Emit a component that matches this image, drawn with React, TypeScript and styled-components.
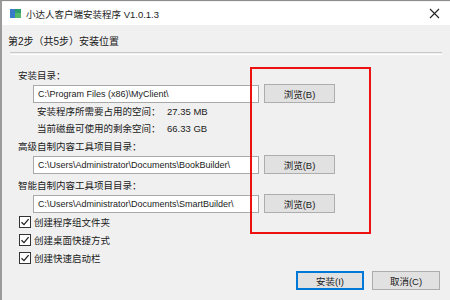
import React from 'react';
import styled, { createGlobalStyle } from 'styled-components';

const GlobalStyle = createGlobalStyle`
  html, body {
    margin: 0;
    padding: 0;
    background: #f0f0f0;
  }
  body {
    font-family: "Liberation Sans", "Noto Sans CJK SC", sans-serif;
    font-size: 9.5px;
    color: #1a1a1a;
  }
`;

const Window = styled.div`
  position: relative;
  width: 450px;
  height: 300px;
  box-sizing: border-box;
  display: flex;
  flex-direction: column;
  background: #f0f0f0;
  border-left: 2px solid #9a9a9a;
  border-top: 1px solid #8c8c8c;
  overflow: hidden;
`;

const TitleBar = styled.div`
  height: 23px;
  flex: 0 0 auto;
  display: flex;
  align-items: center;
  background: #ffffff;
  padding-left: 8px;
  padding-right: 8px;
  border-top: 1px solid #f4f4f4;
`;

const TitleText = styled.span`
  margin-left: 5px;
  flex: 1;
  font-size: 9.5px;
  color: #222;
`;

const Close = styled.span`
  width: 12px;
  height: 12px;
  display: flex;
  align-items: center;
  justify-content: center;
  margin-right: 2px;
`;

const StepHeader = styled.div`
  margin: 9px 0 0 6px;
  line-height: 16px;
  font-size: 10px;
`;

const Separator = styled.div`
  margin: 2px 8px 0 8px;
  height: 1px;
  border-top: 1px solid #c8c8c8;
  border-bottom: 1px solid #ffffff;
`;

const Body = styled.div`
  padding-left: 16px;
  display: flex;
  flex-direction: column;
`;

const GroupLabel = styled.div<{ $top: number }>`
  margin-top: ${({ $top }) => $top}px;
  line-height: 16px;
`;

const PathRow = styled.div`
  display: flex;
  align-items: center;
  height: 19px;
  padding-left: 15px;
`;

const PathInput = styled.div`
  width: 226px;
  height: 18px;
  box-sizing: border-box;
  background: #ffffff;
  border: 1px solid #a9a9a9;
  padding-left: 4px;
  font-size: 9px;
  line-height: 16px;
  white-space: nowrap;
  overflow: hidden;
`;

const Button = styled.button<{ $primary?: boolean }>`
  box-sizing: border-box;
  height: 19px;
  padding: 0;
  font-family: inherit;
  font-size: 9.5px;
  color: #1a1a1a;
  background: #e1e1e1;
  border: 1px solid ${({ $primary }) => ($primary ? '#0078d7' : '#adadad')};
  box-shadow: ${({ $primary }) => ($primary ? 'inset 0 0 0 1px #0078d7' : 'none')};
  cursor: pointer;
`;

const BrowseButton = styled(Button)`
  width: 71px;
  margin-left: 5px;
`;

const InfoRow = styled.div`
  display: grid;
  grid-template-columns: 130px auto;
  padding-left: 19px;
  line-height: 17px;
`;

const CheckRow = styled.label`
  display: flex;
  align-items: center;
  gap: 3px;
  height: 18px;
  padding-left: 1px;
`;

const Footer = styled.div`
  margin-top: auto;
  margin-bottom: 10px;
  display: flex;
  justify-content: flex-end;
  gap: 8px;
  padding-right: 10px;
`;

const FooterButton = styled(Button)`
  width: 68px;
`;

const Highlight = styled.div`
  position: absolute;
  left: 248px;
  top: 66px;
  width: 117px;
  height: 163px;
  border: 2px solid #ee1111;
  pointer-events: none;
`;

const AppIcon = () => (
  <svg width="11" height="9" viewBox="0 0 11 9">
    <rect x="0" y="0" width="11" height="9" fill="#2f9e6e" />
    <rect x="0" y="0" width="5" height="9" fill="#3a7bc8" />
    <rect x="5" y="4" width="6" height="5" fill="#55b86a" />
  </svg>
);

const CheckBox = () => (
  <svg width="12" height="12" viewBox="0 0 12 12">
    <rect x="0.5" y="0.5" width="11" height="11" fill="#ffffff" stroke="#333333" />
    <path d="M2.5 6.2 L5 8.6 L9.6 3.2" fill="none" stroke="#222222" strokeWidth="1.3" />
  </svg>
);

const CloseIcon = () => (
  <svg width="11" height="11" viewBox="0 0 11 11">
    <path d="M1 1 L10 10 M10 1 L1 10" stroke="#222" strokeWidth="1.1" />
  </svg>
);

const paths = [
  { label: '高级自制内容工具项目目录：', value: 'C:\\Users\\Administrator\\Documents\\BookBuilder\\', top: 2 },
  { label: '智能自制内容工具项目目录：', value: 'C:\\Users\\Administrator\\Documents\\SmartBuilder\\', top: 4 },
];

const checks = ['创建程序组文件夹', '创建桌面快捷方式', '创建快速启动栏'];

export default function App() {
  return (
    <>
      <GlobalStyle />
      <Window>
        <TitleBar>
          <AppIcon />
          <TitleText>小达人客户端安装程序 V1.0.1.3</TitleText>
          <Close>
            <CloseIcon />
          </Close>
        </TitleBar>
        <StepHeader>第2步（共5步）安装位置</StepHeader>
        <Separator />
        <Body>
          <GroupLabel $top={13}>安装目录：</GroupLabel>
          <PathRow>
            <PathInput>C:\Program Files (x86)\MyClient\</PathInput>
            <BrowseButton>浏览(B)</BrowseButton>
          </PathRow>
          <InfoRow>
            <span>安装程序所需要占用的空间：</span>
            <span>27.35 MB</span>
          </InfoRow>
          <InfoRow>
            <span>当前磁盘可使用的剩余空间：</span>
            <span>66.33 GB</span>
          </InfoRow>
          {paths.map((p) => (
            <React.Fragment key={p.label}>
              <GroupLabel $top={p.top}>{p.label}</GroupLabel>
              <PathRow>
                <PathInput>{p.value}</PathInput>
                <BrowseButton>浏览(B)</BrowseButton>
              </PathRow>
            </React.Fragment>
          ))}
          {checks.map((c) => (
            <CheckRow key={c}>
              <CheckBox />
              <span>{c}</span>
            </CheckRow>
          ))}
        </Body>
        <Footer>
          <FooterButton $primary>安装(I)</FooterButton>
          <FooterButton>取消(C)</FooterButton>
        </Footer>
        <Highlight />
      </Window>
    </>
  );
}
